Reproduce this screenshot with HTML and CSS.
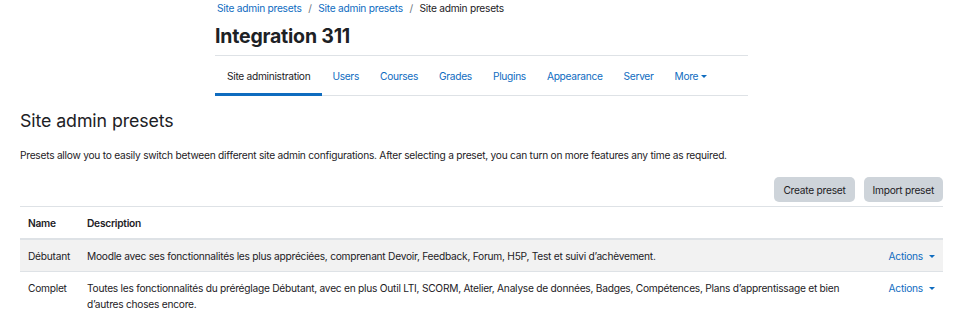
FILE: index.html
```html
<!DOCTYPE html>
<html lang="fr">
<head>
  <meta charset="UTF-8" />
  <title>Site admin presets</title>
  <link rel="stylesheet" href="styles.css">
</head>
<body>
  <header class="page-header">
    <nav class="breadcrumb">
      <a href="#">Site admin presets</a>
      <span class="sep">/</span>
      <a href="#">Site admin presets</a>
      <span class="sep">/</span>
      <span>Site admin presets</span>
    </nav>
    <h1>Integration 311</h1>
    <ul class="tabs">
      <li class="active">Site administration</li>
      <li>Users</li>
      <li>Courses</li>
      <li>Grades</li>
      <li>Plugins</li>
      <li>Appearance</li>
      <li>Server</li>
      <li>More<span class="caret"></span></li>
    </ul>
  </header>

  <main class="content">
    <h2>Site admin presets</h2>
    <p class="intro">Presets allow you to easily switch between different site admin configurations. After selecting a preset, you can turn on more features any time as required.</p>

    <div class="toolbar">
      <button>Create preset</button>
      <button>Import preset</button>
    </div>

    <table class="presets">
      <thead>
        <tr>
          <th class="col-name">Name</th>
          <th>Description</th>
          <th></th>
        </tr>
      </thead>
      <tbody>
        <tr>
          <td>Débutant</td>
          <td>Moodle avec ses fonctionnalités les plus appréciées, comprenant Devoir, Feedback, Forum, H5P, Test et suivi d’achèvement.</td>
          <td class="actions"><a href="#">Actions<span class="caret"></span></a></td>
        </tr>
        <tr>
          <td>Complet</td>
          <td>Toutes les fonctionnalités du préréglage Débutant, avec en plus Outil LTI, SCORM, Atelier, Analyse de données, Badges, Compétences, Plans d’apprentissage et bien d’autres choses encore.</td>
          <td class="actions"><a href="#">Actions<span class="caret"></span></a></td>
        </tr>
      </tbody>
    </table>
  </main>
</body>
</html>
```

FILE: styles.css
```css
body {
  font-family: Inter, "Noto Sans", sans-serif;
  font-size: 10.2px;
  letter-spacing: -0.25px;
  color: #1d2125;
  background: #fff;
  margin: 0;
}

a {
  color: #0f6cbf;
  text-decoration: none;
}

.page-header {
  width: 533px;
  margin-left: 215px;
}

.breadcrumb {
  padding: 1px 0 0 2px;
  height: 14px;
  line-height: 14px;
}

.breadcrumb .sep {
  color: #6a737b;
  margin: 0 4px;
}

h1 {
  font-size: 19.5px;
  font-weight: 700;
  letter-spacing: -0.2px;
  margin: 0;
  padding: 9px 0 0;
  height: 31px;
  line-height: 24px;
}

.tabs {
  list-style: none;
  margin: 0;
  padding: 0;
  display: flex;
  border-top: 1px solid #dee2e6;
  border-bottom: 1px solid #dee2e6;
}

.tabs li {
  flex-shrink: 0;
  white-space: nowrap;
  color: #0f6cbf;
  padding: 0 10.5px;
  letter-spacing: -0.3px;
  height: 37px;
  line-height: 40px;
  border-bottom: 3px solid transparent;
  margin-bottom: -1px;
}

.tabs li.active {
  color: #1d2125;
  padding: 0 11.5px 0 12px;
  border-bottom-color: #0f6cbf;
}

.caret {
  display: inline-block;
  width: 0;
  height: 0;
  border-left: 3px solid transparent;
  border-right: 3px solid transparent;
  border-top: 3.5px solid currentColor;
  vertical-align: 2px;
  margin-left: 3px;
}

.content {
  padding: 0 24px 0 20px;
}

h2 {
  font-size: 17.8px;
  font-weight: 400;
  letter-spacing: -0.1px;
  margin: 0;
  padding-top: 13px;
  line-height: 24px;
}

.intro {
  margin: 0;
  padding-top: 14px;
  line-height: 16px;
}

.toolbar {
  display: flex;
  justify-content: flex-end;
  gap: 9px;
  margin-top: 14px;
  margin-bottom: 4px;
}

.toolbar button {
  font-family: inherit;
  font-size: 10.2px;
  letter-spacing: -0.25px;
  color: #1d2125;
  background: #ced4da;
  border: none;
  border-radius: 5px;
  height: 25px;
  padding: 0 9px;
}

.presets {
  width: 100%;
  border-collapse: collapse;
}

.presets th,
.presets td {
  text-align: left;
  vertical-align: top;
  padding: 8px;
  line-height: 16px;
  border-top: 1px solid #dee2e6;
}

.presets th {
  font-weight: 600;
  padding-bottom: 7px;
  border-bottom: 2px solid #dee2e6;
}

.presets th.col-name {
  width: 43px;
}

.presets td {
  padding-bottom: 8px;
}

.presets tbody tr:nth-child(odd) td {
  background: #f2f2f2;
  padding-top: 8px;
  padding-bottom: 7px;
}

.presets td.actions {
  text-align: right;
  white-space: nowrap;
  width: 45px;
}

.presets td.actions .caret {
  margin-left: 6px;
}
```
